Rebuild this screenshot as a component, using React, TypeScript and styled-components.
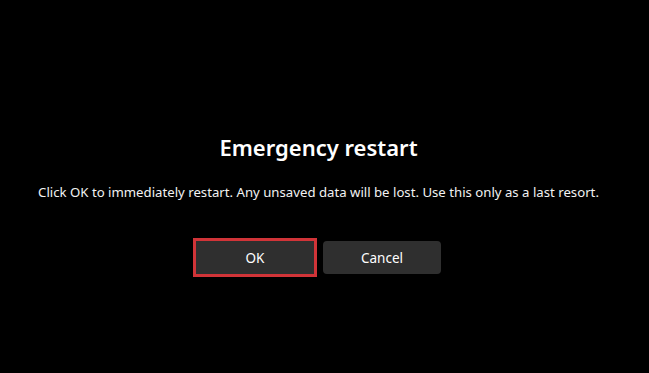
import styled, { createGlobalStyle } from 'styled-components';

const GlobalStyle = createGlobalStyle`
  html, body {
    margin: 0;
    padding: 0;
    background: #000;
  }
  * {
    box-sizing: border-box;
  }
`;

const Screen = styled.div`
  width: 649px;
  height: 373px;
  background: #000;
  display: flex;
  flex-direction: column;
  align-items: center;
  padding: 132px 12px 0 0;
  font-family: "Noto Sans", "Open Sans", "Liberation Sans", sans-serif;
  color: #fff;
`;

const Title = styled.h1`
  margin: 0;
  font-size: 22px;
  line-height: 30px;
  font-weight: 600;
`;

const Message = styled.p`
  margin: 20px 0 0;
  font-size: 13.2px;
  line-height: 20px;
  font-weight: 400;
  color: #f2f2f2;
`;

const Actions = styled.div`
  display: flex;
  gap: 9px;
  margin-top: 39px;
`;

const Button = styled.button<{ $focused?: boolean }>`
  width: 118px;
  height: 33px;
  border: none;
  background: #2f2f2f;
  color: #fff;
  font-family: inherit;
  font-size: 13.5px;
  outline: ${p => (p.$focused ? '3px solid #d13438' : 'none')};
  outline-offset: 0;
  border-radius: ${p => (p.$focused ? '0' : '4px')};
`;

export default function App() {
  return (
    <>
      <GlobalStyle />
      <Screen>
        <Title>Emergency restart</Title>
        <Message>
          Click OK to immediately restart. Any unsaved data will be lost. Use this only as a last resort.
        </Message>
        <Actions>
          <Button $focused>OK</Button>
          <Button>Cancel</Button>
        </Actions>
      </Screen>
    </>
  );
}
